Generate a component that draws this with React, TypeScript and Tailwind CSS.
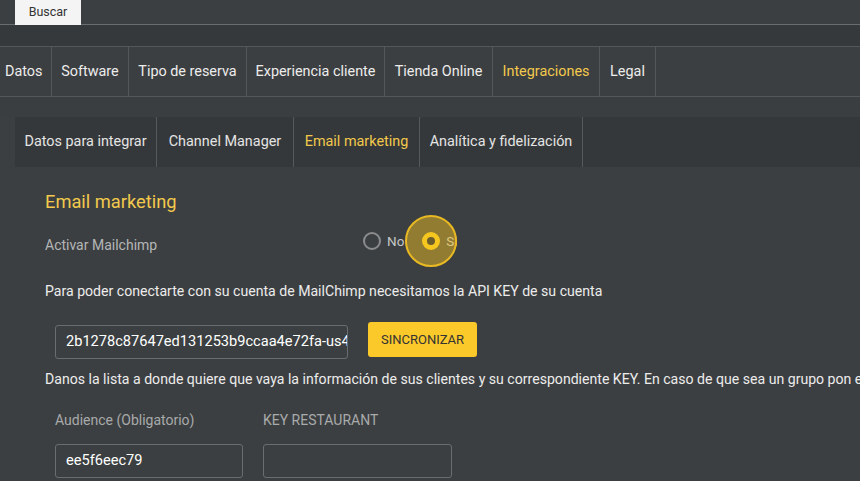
import React from "react";

export default function App() {
  const tabs: [string, number][] = [
    ["Datos", 52],
    ["Software", 77],
    ["Tipo de reserva", 118],
    ["Experiencia cliente", 138],
    ["Tienda Online", 108],
    ["Integraciones", 107],
    ["Legal", 56],
  ];
  const sub: [string, number][] = [
    ["Datos para integrar", 142],
    ["Channel Manager", 137],
    ["Email marketing", 126],
    ["Analítica y fidelización", 163],
  ];
  return (
    <div className="w-[860px] h-[481px] overflow-hidden bg-[#3c3f41] text-[#e6e6e6]" style={{ fontFamily: "Roboto, 'Liberation Sans', sans-serif" }}>
      {/* top search row */}
      <div className="flex h-[25px] items-stretch">
        <div className="w-[15px] border-b border-[#6a6d6f]" />
        <div className="w-[66px] bg-[#f4f4f4] text-[#333] text-[12.5px] flex items-center justify-center">Buscar</div>
        <div className="flex-1 border-b border-[#6a6d6f]" />
      </div>
      <div className="h-[21px] bg-[#36393b]" />
      {/* main nav */}
      <div className="flex h-[51px] border-t border-b border-[#555859] bg-[#3c3f41] text-[14.4px]">
        {tabs.map(([t, w], i) => (
          <div
            key={t}
            style={{ width: w }}
            className={`flex items-center ${i === 0 ? "pl-[5px]" : "justify-center"} border-r border-[#555859] ${t === "Integraciones" ? "text-[#f2c94c]" : "text-[#ececec]"}`}
          >
            {t}
          </div>
        ))}
      </div>
      <div className="h-[20px] bg-[#3b3e40]" />
      {/* sub tabs */}
      <div className="ml-[15px] flex h-[50px] bg-[#35383a] text-[14.4px]">
        {sub.map(([t, w]) => (
          <div
            key={t}
            style={{ width: w }}
            className={`flex items-center justify-center border-r border-[#56595a] ${t === "Email marketing" ? "text-[#f2c94c]" : "text-[#e4e4e4]"}`}
          >
            {t}
          </div>
        ))}
      </div>
      {/* content */}
      <div className="pl-[45px] pt-[24px]">
        <div className="text-[18.3px] text-[#f2c94c] leading-[22px]">Email marketing</div>
        <div className="flex items-center h-[36px] mt-[10px]">
          <div className="w-[318px] text-[14px] text-[#b4b6b7] pt-[8px]">Activar Mailchimp</div>
          <div className="flex items-center">
            <div className="w-[18px] h-[18px] rounded-full border-2 border-[#8a8c8d]" />
            <span className="ml-[6px] text-[13.5px] text-[#c4c6c7]">No</span>
            <div className="relative ml-[18px] w-[18px] h-[18px]">
              <div className="absolute z-10 left-[-17px] top-[-17px] w-[52px] h-[52px] rounded-full bg-[rgba(232,185,35,0.5)] border-2 border-[#e8b923]" />
              <div className="absolute z-20 inset-0 rounded-full border-[5px] border-[#f6c71f] bg-[#6b5d2c]" />
            </div>
            <span className="ml-[6px] text-[13.5px] text-[#d8d8d8]">Si</span>
          </div>
        </div>
        <div className="mt-[22px] text-[14.1px] leading-[20px] text-[#ececec]">Para poder conectarte con su cuenta de MailChimp necesitamos la API KEY de su cuenta</div>
        <div className="flex items-start mt-[24px] pl-[10px]">
          <div className="w-[293px] h-[34px] rounded-[3px] border border-[#6a6d6f] flex items-center px-[10px] text-[14.6px] text-white overflow-hidden whitespace-nowrap">
            2b1278c87647ed131253b9ccaa4e72fa-us4
          </div>
          <div className="ml-[20px] w-[109px] h-[35px] rounded-[3px] bg-[#fcc92a] text-[#333] text-[13px] flex items-center justify-center -mt-[3px]">
            SINCRONIZAR
          </div>
        </div>
        <div className="mt-[10px] text-[14.1px] leading-[20px] text-[#ececec] whitespace-nowrap">
          Danos la lista a donde quiere que vaya la información de sus clientes y su correspondiente KEY. En caso de que sea un grupo pon el
        </div>
        <div className="flex pl-[10px] mt-[21px] gap-[20px]">
          <div className="w-[188px]">
            <div className="text-[14px] leading-[20px] text-[#a8aaab]">Audience (Obligatorio)</div>
            <div className="mt-[14px] h-[34px] rounded-[3px] border border-[#6a6d6f] flex items-center px-[10px] text-[14.6px] text-white">ee5f6eec79</div>
          </div>
          <div className="w-[189px]">
            <div className="text-[14px] leading-[20px] text-[#a8aaab]">KEY RESTAURANT</div>
            <div className="mt-[14px] h-[34px] rounded-[3px] border border-[#6a6d6f]" />
          </div>
        </div>
      </div>
    </div>
  );
}
